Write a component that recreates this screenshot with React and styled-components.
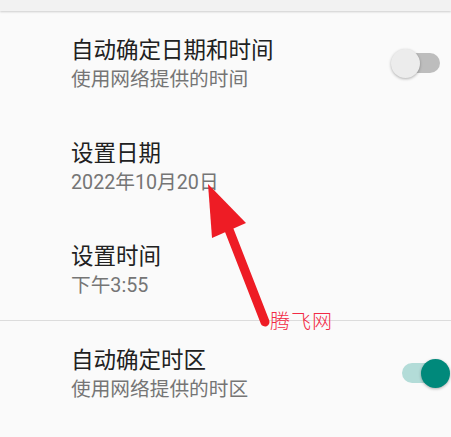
import React from 'react';
import styled, { createGlobalStyle } from 'styled-components';

const Global = createGlobalStyle`
  html, body { margin: 0; padding: 0; background: #fafafa; }
  body { font-family: Roboto, "Noto Sans CJK SC", sans-serif; }
`

/***** Component style *****/
const Page = styled.div`
  position: relative;
  width: 451px;
  height: 437px;
  overflow: hidden;
  background: #fafafa;
`
const TopBar = styled.div`
  height: 11px;
  background: #f2f2f2;
  box-shadow: 0 1px 2px rgba(0,0,0,0.18);
  position: relative;
  z-index: 1;
`
const Row = styled.div`
  display: flex;
  align-items: center;
  justify-content: space-between;
  height: 103px;
  padding: 0 1px 0 71px;
  box-sizing: border-box;
`
const Texts = styled.div`
  display: flex;
  flex-direction: column;
  padding-top: 5px;
`
const Title = styled.div`
  font-size: 22.5px;
  line-height: 29px;
  font-weight: 400;
  color: #212121;
`
const Sub = styled.div`
  font-size: 19.7px;
  line-height: 29px;
  font-weight: 400;
  color: #757575;
`
const Divider = styled.div`
  height: 1px;
  background: #dcdcdc;
`
const Switch = styled.div`
  position: relative;
  width: 59px;
  height: 30px;
`
const Track = styled.div`
  position: absolute;
  left: 11px;
  right: 10px;
  top: 5px;
  height: 20px;
  border-radius: 10px;
  background: ${p => (p.on ? '#b3dcd8' : '#bdbdbd')};
`
const Thumb = styled.div`
  position: absolute;
  top: 1px;
  left: ${p => (p.on ? '30px' : '0px')};
  width: 29px;
  height: 29px;
  border-radius: 50%;
  background: ${p => (p.on ? '#00897b' : '#ececec')};
  box-shadow: 0 1px 3px rgba(0,0,0,0.3);
`
const Watermark = styled.div`
  position: absolute;
  left: 270px;
  top: 307px;
  font-family: "Noto Sans CJK SC", sans-serif;
  font-weight: 300;
  font-size: 20px;
  line-height: 28px;
  color: #f22a45;
  letter-spacing: 1px;
`
const Arrow = styled.svg`
  position: absolute;
  left: 0;
  top: 0;
`
/****** ******************** *****/

const Toggle = ({ on }) => (
  <Switch>
    <Track on={on ? 1 : 0} />
    <Thumb on={on ? 1 : 0} />
  </Switch>
)

const items = [
  { title: '自动确定日期和时间', sub: '使用网络提供的时间', toggle: false },
  { title: '设置日期', sub: '2022年10月20日' },
  { title: '设置时间', sub: '下午3:55' },
]

export default function App() {
  return (
    <Page>
      <Global />
      <TopBar />
      {items.map((it, i) => (
        <Row key={i}>
          <Texts>
            <Title>{it.title}</Title>
            <Sub>{it.sub}</Sub>
          </Texts>
          {it.toggle !== undefined && <Toggle on={it.toggle} />}
        </Row>
      ))}
      <Divider />
      <Row>
        <Texts>
          <Title>自动确定时区</Title>
          <Sub>使用网络提供的时区</Sub>
        </Texts>
        <Toggle on />
      </Row>
      <Arrow width="451" height="437" viewBox="0 0 451 437">
        <line x1="265" y1="322" x2="226" y2="222" stroke="#ee1c25" strokeWidth="9" strokeLinecap="round" />
        <polygon points="208,184 212,238 246,223" fill="#ee1c25" />
      </Arrow>
      <Watermark>腾飞网</Watermark>
    </Page>
  )
}
